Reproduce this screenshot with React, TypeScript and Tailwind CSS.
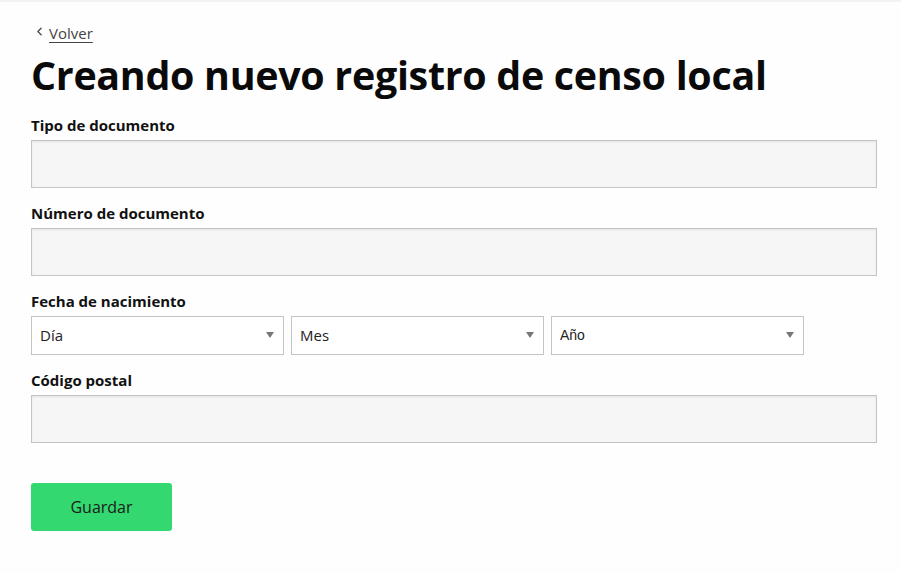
import { ChevronLeft } from "lucide-react"

const font = { fontFamily: '"Open Sans", "Noto Sans", sans-serif' }

function TextField({ label }: { label: string }) {
  return (
    <div className="flex flex-col">
      <label className="text-[15px] font-bold leading-[23px] text-[#111]">{label}</label>
      <input
        type="text"
        className="mt-[3px] h-[48px] w-full border border-[#c4c4c4] bg-[#f6f6f6] shadow-[inset_0_1px_2px_rgba(0,0,0,0.08)] outline-none"
      />
    </div>
  )
}

function SelectBox({ placeholder, arial }: { placeholder: string; arial?: boolean }) {
  return (
    <div className="relative flex h-[39px] w-[253px] items-center border border-[#c4c4c4] bg-white pl-[8px]">
      <span
        className={arial ? "font-['Liberation_Sans',Arial,sans-serif] text-[14px] text-[#222]" : "text-[15px] text-[#222]"}
      >
        {placeholder}
      </span>
      <span className="absolute right-[9px] top-[15px] h-0 w-0 border-x-[4px] border-t-[6px] border-x-transparent border-t-[#777]" />
    </div>
  )
}

export default function App() {
  return (
    <div className="min-h-[573px] bg-[#fefefe] text-[#111]" style={font}>
      <div className="h-[2px] bg-[#f2f2f2]" />
      <div className="pl-[31px] pr-[24px] pt-[20px]">
        <a href="#" className="flex items-center gap-[3px] text-[15px] leading-[22px] text-[#444]">
          <ChevronLeft size={13} strokeWidth={2.25} className="ml-[2px] -mt-[4px]" />
          <span className="underline underline-offset-[3px]">Volver</span>
        </a>
        <h1 className="mt-[7px] text-[39.4px] font-bold leading-[48px] tracking-[-0.3px] text-[#0a0a0a]">
          Creando nuevo registro de censo local
        </h1>
        <div className="mt-[15px] flex flex-col gap-[14px]">
          <TextField label="Tipo de documento" />
          <TextField label="Número de documento" />
          <div className="flex flex-col">
            <label className="text-[15px] font-bold leading-[23px] text-[#111]">Fecha de nacimiento</label>
            <div className="mt-[3px] flex gap-[7px]">
              <SelectBox placeholder="Día" />
              <SelectBox placeholder="Mes" />
              <SelectBox placeholder="Año" arial />
            </div>
          </div>
          <TextField label="Código postal" />
        </div>
        <button className="mt-[40px] h-[48px] w-[141px] rounded-[3px] bg-[#34d870] text-[16px] text-[#1a1a1a]">
          Guardar
        </button>
      </div>
    </div>
  )
}
